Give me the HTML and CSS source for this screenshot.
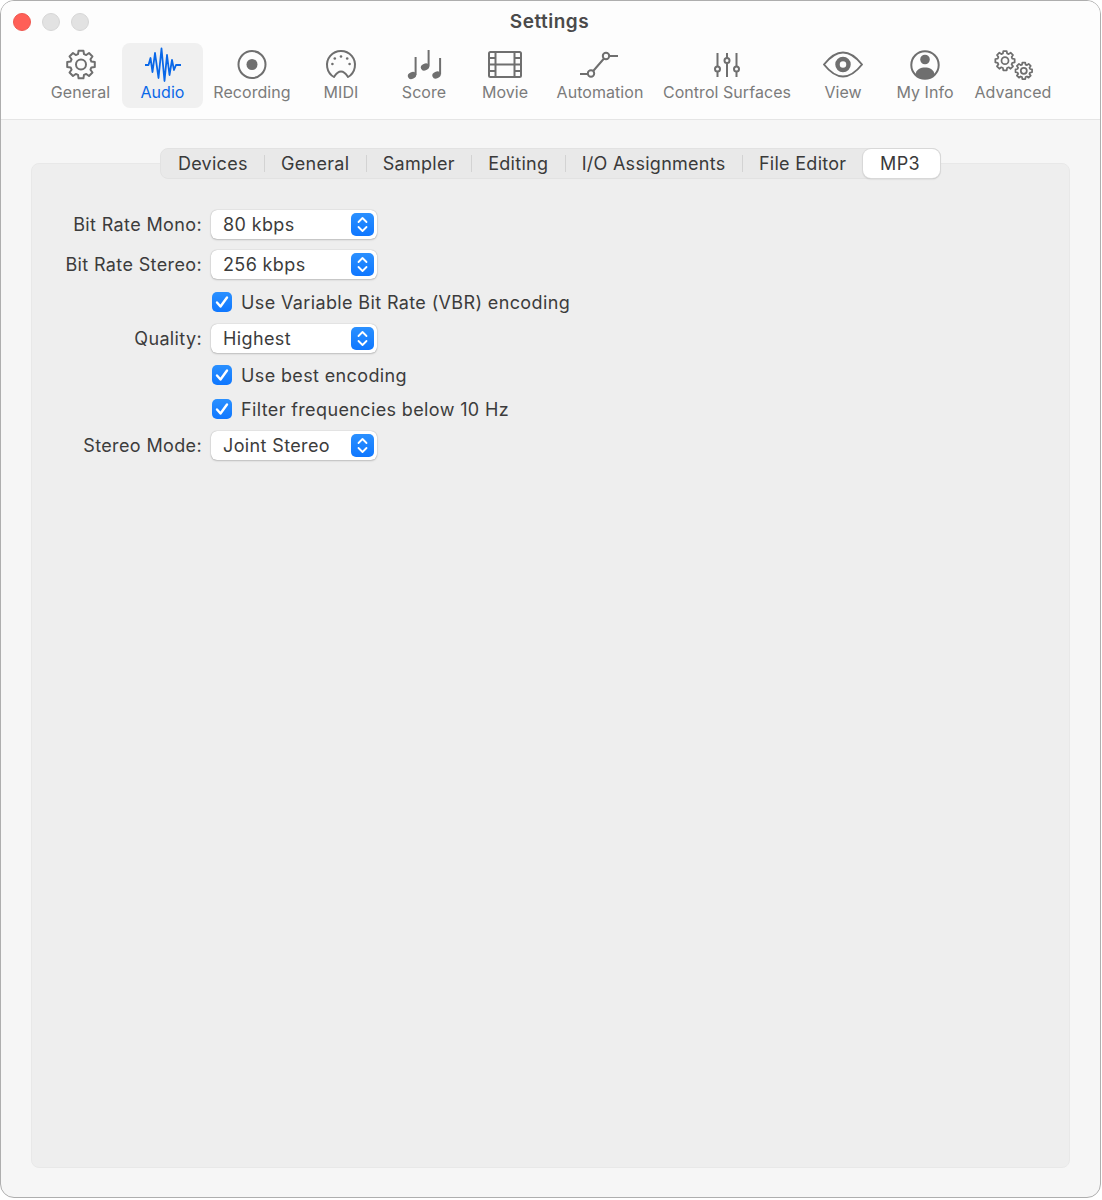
FILE: index.html
```html
<!DOCTYPE html>
<html>
<head>
  <meta charset="UTF-8">
  <title>Settings</title>
  <link rel="stylesheet" href="styles.css">
</head>
<body>
  <div class="window">
    <div class="header">
      <div class="titlebar">
        <div class="lights">
          <span class="light red"></span>
          <span class="light"></span>
          <span class="light"></span>
        </div>
        <div class="title">Settings</div>
      </div>
      <div class="toolbar">
        <div class="tool">
          <svg class="icon" viewBox="0 0 44 36">
            <g transform="translate(6 1.5)">
              <path id="gear" d="M13.02 5.62L13.57 2.21H18.43L18.98 5.62L21.24 6.55L24.03 4.53L27.47 7.97L25.45 10.76L26.38 13.02L29.79 13.57V18.43L26.38 18.98L25.45 21.24L27.47 24.03L24.03 27.47L21.24 25.45L18.98 26.38L18.43 29.79H13.57L13.02 26.38L10.76 25.45L7.97 27.47L4.53 24.03L6.55 21.24L5.62 18.98L2.21 18.43V13.57L5.62 13.02L6.55 10.76L4.53 7.97L7.97 4.53L10.76 6.55Z"/>
              <circle cx="16" cy="16" r="5"/>
            </g>
          </svg>
          <span>General</span>
        </div>
        <div class="tool active">
          <svg class="icon" viewBox="0 0 44 36">
            <polyline points="4,18 7.5,18 9.5,11 11.5,25 14,6 17.5,31 20.5,1.5 23.5,34 26,8 28.5,28 31,13 33,23 35,18 40,18"/>
          </svg>
          <span>Audio</span>
        </div>
        <div class="tool">
          <svg class="icon" viewBox="0 0 44 36">
            <circle cx="22" cy="17.5" r="13.5"/>
            <circle class="solid" cx="22" cy="17.5" r="5.5"/>
          </svg>
          <span>Recording</span>
        </div>
        <div class="tool">
          <svg class="icon" viewBox="0 0 44 36">
            <path d="M15 30A14 14 0 1 1 29 30Q22 19 15 30Z"/>
            <circle class="solid" cx="22" cy="9.5" r="1.3"/>
            <circle class="solid" cx="15.8" cy="11.5" r="1.3"/>
            <circle class="solid" cx="28.2" cy="11.5" r="1.3"/>
            <circle class="solid" cx="13.4" cy="17" r="1.3"/>
            <circle class="solid" cx="30.6" cy="17" r="1.3"/>
          </svg>
          <span>MIDI</span>
        </div>
        <div class="tool">
          <svg class="icon" viewBox="0 0 44 36">
            <ellipse class="solid" cx="10" cy="28.5" rx="4.3" ry="3.3" transform="rotate(-25 10 28.5)"/>
            <line x1="13.6" y1="10" x2="13.6" y2="28"/>
            <ellipse class="solid" cx="23" cy="20" rx="4.3" ry="3.3" transform="rotate(-25 23 20)"/>
            <line x1="26.6" y1="3" x2="26.6" y2="19.5"/>
            <ellipse class="solid" cx="34.5" cy="28" rx="4.3" ry="3.3" transform="rotate(-25 34.5 28)"/>
            <line x1="38.1" y1="11" x2="38.1" y2="27.5"/>
          </svg>
          <span>Score</span>
        </div>
        <div class="tool">
          <svg class="icon" viewBox="0 0 44 36">
            <rect x="6" y="5" width="32" height="25" rx="1.5"/>
            <path d="M12.5 5V30M31.5 5V30M12.5 17.5H31.5M6 11H12.5M6 17.5H12.5M6 24H12.5M31.5 11H38M31.5 17.5H38M31.5 24H38"/>
          </svg>
          <span>Movie</span>
        </div>
        <div class="tool">
          <svg class="icon" viewBox="0 0 44 36">
            <path d="M2 27H10M15.2 24L26 11.5M31 9H40"/>
            <circle cx="13" cy="26.5" r="3.2"/>
            <circle cx="28" cy="9" r="3.2"/>
          </svg>
          <span>Automation</span>
        </div>
        <div class="tool">
          <svg class="icon" viewBox="0 0 44 36">
            <path d="M12.5 6V19.5M12.5 24.5V30M22 6V11M22 16V30M31.5 6V19.5M31.5 24.5V30"/>
            <circle cx="12.5" cy="22" r="2.5"/>
            <circle cx="22" cy="13.5" r="2.5"/>
            <circle cx="31.5" cy="22" r="2.5"/>
          </svg>
          <span>Control Surfaces</span>
        </div>
        <div class="tool">
          <svg class="icon" viewBox="0 0 44 36">
            <path d="M3 17.5Q22 -6.5 41 17.5Q22 41.5 3 17.5Z"/>
            <circle cx="22" cy="17.5" r="5.5" stroke-width="4.5"/>
          </svg>
          <span>View</span>
        </div>
        <div class="tool">
          <svg class="icon" viewBox="0 0 44 36">
            <circle cx="22" cy="18" r="13.7"/>
            <circle class="solid" cx="22" cy="12.5" r="4.8"/>
            <path class="solid" d="M12.5 27.7C13 22 18 20.5 22 20.5C26 20.5 31 22 31.5 27.7A13.5 13.5 0 0 1 12.5 27.7Z"/>
          </svg>
          <span>My Info</span>
        </div>
        <div class="tool">
          <svg class="icon" viewBox="0 0 44 36">
            <g transform="translate(2.8 2.5) scale(.7)" stroke-width="2.5">
              <use href="#gear"/>
              <circle cx="16" cy="16" r="5"/>
            </g>
            <g transform="translate(23.2 14.2) scale(.6)" stroke-width="2.9">
              <use href="#gear"/>
              <circle cx="16" cy="16" r="5"/>
            </g>
          </svg>
          <span>Advanced</span>
        </div>
      </div>
    </div>

    <div class="main">
      <div class="tabs">
        <div class="tab">Devices</div>
        <div class="tab">General</div>
        <div class="tab">Sampler</div>
        <div class="tab">Editing</div>
        <div class="tab">I/O Assignments</div>
        <div class="tab">File Editor</div>
        <div class="tab selected">MP3</div>
      </div>

      <div class="panel">
        <div class="form">
          <label>Bit Rate Mono:</label>
          <div class="select">80 kbps
            <span class="stepper"><svg viewBox="0 0 23 23"><path d="M7.5 9L11.5 5L15.5 9M7.5 14L11.5 18L15.5 14"/></svg></span>
          </div>

          <label>Bit Rate Stereo:</label>
          <div class="select">256 kbps
            <span class="stepper"><svg viewBox="0 0 23 23"><path d="M7.5 9L11.5 5L15.5 9M7.5 14L11.5 18L15.5 14"/></svg></span>
          </div>

          <div class="check">
            <span class="box"><svg viewBox="0 0 20 20"><path d="M5 10.5L8.5 14.5L15 5.5"/></svg></span>
            Use Variable Bit Rate (VBR) encoding
          </div>

          <label>Quality:</label>
          <div class="select">Highest
            <span class="stepper"><svg viewBox="0 0 23 23"><path d="M7.5 9L11.5 5L15.5 9M7.5 14L11.5 18L15.5 14"/></svg></span>
          </div>

          <div class="check">
            <span class="box"><svg viewBox="0 0 20 20"><path d="M5 10.5L8.5 14.5L15 5.5"/></svg></span>
            Use best encoding
          </div>

          <div class="check">
            <span class="box"><svg viewBox="0 0 20 20"><path d="M5 10.5L8.5 14.5L15 5.5"/></svg></span>
            Filter frequencies below 10 Hz
          </div>

          <label>Stereo Mode:</label>
          <div class="select">Joint Stereo
            <span class="stepper"><svg viewBox="0 0 23 23"><path d="M7.5 9L11.5 5L15.5 9M7.5 14L11.5 18L15.5 14"/></svg></span>
          </div>
        </div>
      </div>
    </div>
  </div>
</body>
</html>
```

FILE: styles.css
```css
html, body {
  margin: 0;
  background-color: #ffffff;
}
body {
  font-family: Inter, "Noto Sans", sans-serif;
  color: #3c3c3c;
}
.window {
  box-sizing: border-box;
  width: 1101px;
  height: 1198px;
  display: flex;
  flex-direction: column;
  border: 1px solid #aeaeae;
  border-radius: 14px;
  overflow: hidden;
  background-color: #f6f6f6;
}

/* title and toolbar */
.header {
  box-sizing: border-box;
  height: 119px;
  background-color: #fdfdfd;
  border-bottom: 1.5px solid #e5e5e5;
}
.titlebar {
  height: 42px;
  display: grid;
  grid-template-columns: 1fr auto 1fr;
  align-items: center;
}
.lights {
  display: flex;
  gap: 11px;
  padding-left: 12px;
}
.light {
  width: 18px;
  height: 18px;
  box-sizing: border-box;
  border-radius: 50%;
  background-color: #e2e2e2;
  border: 1px solid #d6d6d6;
}
.light.red {
  background-color: #ff5f57;
  border-color: #ee5850;
}
.title {
  padding: 0 2px 1px 0;
  font-size: 19px;
  font-weight: 600;
  letter-spacing: 0.5px;
  color: #4a4a4a;
}
.toolbar {
  display: grid;
  grid-template-columns: 81px 82px 98px 80px 86px 76px 114px 140px 92px 72px 104px;
  padding-left: 39px;
}
.tool {
  height: 65px;
  box-sizing: border-box;
  padding-top: 4px;
  display: flex;
  flex-direction: column;
  align-items: center;
  font-size: 16px;
  line-height: 18px;
  letter-spacing: 0.05px;
  color: #7b7b7b;
  white-space: nowrap;
}
.tool.active {
  margin-left: 1px;
  background-color: #f0f0f0;
  border-radius: 8px;
  color: #0a68e8;
}
.icon {
  width: 44px;
  height: 36px;
  fill: none;
  stroke: #6f6f6f;
  stroke-width: 2;
  stroke-linejoin: round;
}
.icon .solid {
  fill: #6f6f6f;
  stroke: none;
}
.tool.active .icon {
  stroke: #0a68e8;
  stroke-width: 1.8;
}

/* tabs over the panel */
.main {
  flex: 1;
  display: flex;
  flex-direction: column;
  align-items: center;
  padding: 28px 30px 29px;
}
.tabs {
  position: relative;
  z-index: 1;
  height: 31px;
  box-sizing: border-box;
  display: flex;
  align-items: center;
  margin-bottom: -16px;
  background-color: #e9e9e9;
  border: 1px solid #e2e2e2;
  border-radius: 8px;
  font-size: 18px;
  letter-spacing: 0.28px;
  color: #3a3a3a;
}
.tab {
  position: relative;
  padding: 0 16.7px;
  line-height: 29px;
  white-space: nowrap;
}
.tab + .tab::before {
  content: "";
  position: absolute;
  left: 0;
  top: 6px;
  height: 17px;
  width: 1px;
  background-color: #d3d3d3;
}
.tab.selected {
  background-color: #ffffff;
  border-radius: 8px;
  padding: 0 20px 0 17px;
  box-shadow: 0 0 0 1px #d8d8d8, 0 1px 2px rgba(0, 0, 0, 0.2);
}
.tab.selected::before {
  display: none;
}
.panel {
  align-self: stretch;
  flex: 1;
  background-color: #eeeeee;
  border: 1px solid #e8e8e8;
  border-radius: 8px;
}

/* form rows */
.form {
  display: grid;
  grid-template-columns: 170px auto;
  grid-template-rows: 40px 41px 34px 38px 36px 32px 40px;
  column-gap: 9px;
  justify-content: start;
  align-items: center;
  padding-top: 40px;
  font-size: 18px;
  letter-spacing: 0.37px;
}
.form label {
  grid-column: 1;
  text-align: right;
}
.select {
  grid-column: 2;
  box-sizing: border-box;
  width: 166px;
  height: 29px;
  display: flex;
  align-items: center;
  justify-content: space-between;
  padding: 0 3px 0 12px;
  background-color: #ffffff;
  border-radius: 6px;
  box-shadow: 0 0 1px rgba(0, 0, 0, 0.35), 0 1px 2px rgba(0, 0, 0, 0.18);
}
.stepper {
  width: 23px;
  height: 23px;
  border-radius: 5px;
  background: linear-gradient(#2a90ff, #0f77ff);
}
.stepper svg, .box svg {
  display: block;
  fill: none;
  stroke: #ffffff;
  stroke-width: 1.8;
  stroke-linecap: round;
  stroke-linejoin: round;
}
.check {
  grid-column: 2;
  display: flex;
  align-items: center;
  gap: 9px;
  white-space: nowrap;
}
.box {
  width: 20px;
  height: 20px;
  margin-left: 1px;
  border-radius: 5px;
  background: linear-gradient(#2a90ff, #0f77ff);
}
.box svg {
  stroke-width: 2.4;
}
```
